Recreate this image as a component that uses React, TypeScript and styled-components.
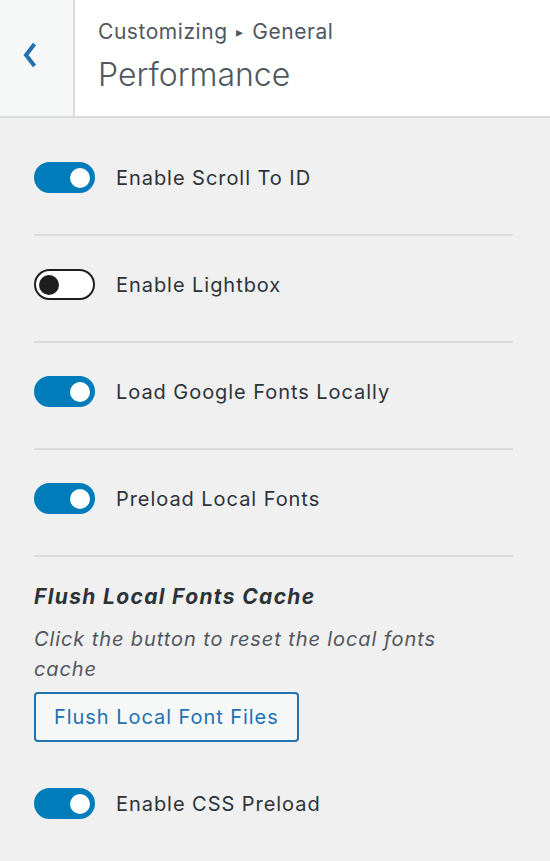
import React, { useState } from "react";
import styled, { createGlobalStyle } from "styled-components";

const GlobalStyle = createGlobalStyle`
  html, body {
    margin: 0;
    padding: 0;
    background: #f0f0f1;
  }
  body {
    font-family: Inter, "Liberation Sans", sans-serif;
    color: #2c3338;
  }
  * {
    box-sizing: border-box;
  }
`;

const Panel = styled.div`
  width: 550px;
  min-height: 861px;
  background: #f0f0f1;
`;

const Header = styled.div`
  display: flex;
  height: 118px;
  background: #fff;
  border-bottom: 2px solid #dcdcde;
`;

const BackButton = styled.button`
  width: 75px;
  flex-shrink: 0;
  display: flex;
  align-items: center;
  justify-content: center;
  padding: 0 13px 6px 0;
  background: #f6f7f7;
  border: none;
  border-right: 2px solid #dcdcde;
  color: #2271b1;
  cursor: pointer;
`;

const Titles = styled.div`
  display: flex;
  flex-direction: column;
  padding: 16px 0 0 23px;
`;

const Crumb = styled.span`
  font-size: 21px;
  line-height: 32px;
  letter-spacing: 0.55px;
  color: #50575e;
`;

const Arrow = styled.span`
  display: inline-block;
  margin: 0 9px 0 8px;
  font-size: 14px;
  vertical-align: 2px;
`;

const Title = styled.h1`
  margin: 2px 0 0;
  font-size: 32px;
  line-height: 50px;
  font-weight: 300;
  color: #50575e;
`;

const Body = styled.div`
  padding: 11px 37px 30px 34px;
`;

const ToggleRow = styled.div<{ $last?: boolean }>`
  display: flex;
  align-items: center;
  gap: 21px;
  padding: 33px 0 ${(p) => (p.$last ? "0" : "41px")};
  border-bottom: ${(p) => (p.$last ? "none" : "2px solid #dcdcde")};
`;

const Track = styled.button<{ $on: boolean }>`
  position: relative;
  width: 61px;
  height: 31px;
  flex-shrink: 0;
  padding: 0;
  border-radius: 16px;
  cursor: pointer;
  background: ${(p) => (p.$on ? "#007cba" : "#fff")};
  border: 2px solid ${(p) => (p.$on ? "#007cba" : "#1e1e1e")};
`;

const Knob = styled.span<{ $on: boolean }>`
  position: absolute;
  top: 3.5px;
  left: ${(p) => (p.$on ? "34px" : "3px")};
  width: 20px;
  height: 20px;
  border-radius: 50%;
  background: ${(p) => (p.$on ? "#fff" : "#1e1e1e")};
`;

const Label = styled.span`
  font-size: 20px;
  line-height: 30px;
  letter-spacing: 0.95px;
  color: #2c3338;
`;

const Section = styled.div`
  padding-top: 25px;
  padding-bottom: 13px;
`;

const SectionTitle = styled.h3`
  margin: 0 0 12px;
  font-size: 21px;
  line-height: 30px;
  font-weight: 700;
  font-style: italic;
  letter-spacing: 1.35px;
  color: #2c3338;
`;

const Description = styled.p`
  margin: 0 0 8px;
  max-width: 440px;
  font-size: 20px;
  line-height: 30px;
  font-style: italic;
  letter-spacing: 0.9px;
  color: #50575e;
`;

const FlushButton = styled.button`
  height: 50px;
  padding: 0 18px;
  font-family: inherit;
  font-size: 20px;
  letter-spacing: 0.95px;
  color: #2271b1;
  background: #f6f7f7;
  border: 2px solid #2271b1;
  border-radius: 4px;
  cursor: pointer;
`;

const Toggle = ({ label, initial, last }: { label: string; initial: boolean; last?: boolean }) => {
  const [on, setOn] = useState(initial);
  return (
    <ToggleRow $last={last}>
      <Track $on={on} onClick={() => setOn(!on)} aria-pressed={on}>
        <Knob $on={on} />
      </Track>
      <Label>{label}</Label>
    </ToggleRow>
  );
};

export default function App() {
  return (
    <Panel>
      <GlobalStyle />
      <Header>
        <BackButton aria-label="Back">
          <svg width="18" height="28" viewBox="0 0 18 28">
            <path d="M13.5 3 L5 14 L13.5 25" fill="none" stroke="currentColor" strokeWidth="4" />
          </svg>
        </BackButton>
        <Titles>
          <Crumb>
            Customizing<Arrow>▸</Arrow>General
          </Crumb>
          <Title>Performance</Title>
        </Titles>
      </Header>
      <Body>
        <Toggle label="Enable Scroll To ID" initial={true} />
        <Toggle label="Enable Lightbox" initial={false} />
        <Toggle label="Load Google Fonts Locally" initial={true} />
        <Toggle label="Preload Local Fonts" initial={true} />
        <Section>
          <SectionTitle>Flush Local Fonts Cache</SectionTitle>
          <Description>Click the button to reset the local fonts cache</Description>
          <FlushButton>Flush Local Font Files</FlushButton>
        </Section>
        <Toggle label="Enable CSS Preload" initial={true} last />
      </Body>
    </Panel>
  );
}
